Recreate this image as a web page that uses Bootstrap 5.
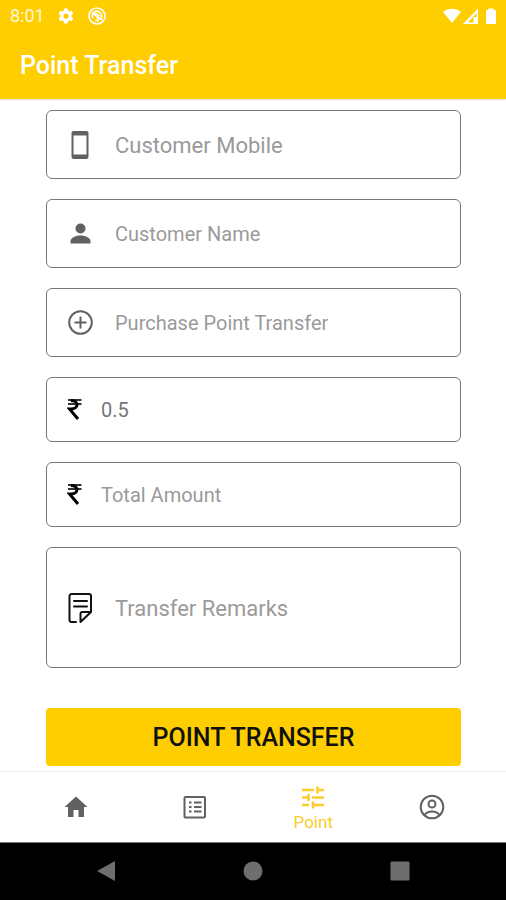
<!DOCTYPE html>
<html lang="en">
<head>
<meta charset="utf-8">
<meta name="viewport" content="width=device-width, initial-scale=1">
<title>Point Transfer</title>
<link href="https://cdn.jsdelivr.net/npm/bootstrap@5.3.0/dist/css/bootstrap.min.css" rel="stylesheet">
<style>
  :root { --brand: #ffce00; --icon: #616161; }
  body { font-family: Roboto, "Liberation Sans", sans-serif; background: #fff; }
  svg { display: block; flex: none; }
  .app-header { background: var(--brand); color: #fff; box-shadow: 0 1px 2px rgba(0, 0, 0, .15); }
  .status-bar { height: 32px; padding: 0 8px 0 10px; font-size: 18px; line-height: 32px; color: #fff8d8; }
  .app-title { height: 67px; padding-left: 20px; font-size: 25px; line-height: 68px; font-weight: 500; }
  .transfer-form { padding: 11px 45px 5px 46px; gap: 20px; }
  .field { height: 69px; border: 1px solid #777; border-radius: 6px; padding: 0 20px; background: #fff; cursor: text; color: var(--icon); }
  .field-amount { height: 65px; }
  .field-remarks { height: 121px; }
  .field:focus-within { border-color: var(--brand); }
  .field-icon { width: 28px; margin-right: 20px; }
  .field-amount .field-icon { width: 16px; margin-right: 18px; color: #000; }
  .field-remarks .field-icon { color: #111; }
  .entry { min-width: 0; border: 0; padding: 0; outline: 0; background: transparent; font-size: 20px; line-height: 28px; color: #777; resize: none; }
  .entry-lg { font-size: 22px; padding-top: 2px; }
  .entry::placeholder { color: #9a9a9a; opacity: 1; }
  .submit-btn, .submit-btn:hover { background: var(--brand); color: #111; height: 58px; margin-top: 20px; border: 0; border-radius: 4px; padding: 2px 0 0; font-size: 25px; font-weight: 500; line-height: 56px; }
  .tab-bar { height: 71px; border-top: 1px solid #f0f0f0; background: #fff; padding: 0 15px 0 17px; }
  .tab-link { color: var(--icon); text-decoration: none; font-size: 17px; line-height: 20px; gap: 3px; }
  .tab-link.active { color: #fdcc2a; padding-top: 2px; }
  .system-bar { height: 58px; background: #000; padding: 0 33px; border-top: 1px solid #777; }
  .system-btn { border: 0; padding: 0; background: transparent; color: #6e6e6e; height: 56px; }
</style>
<script src="https://cdn.jsdelivr.net/npm/bootstrap@5.3.0/dist/js/bootstrap.bundle.min.js"></script>
</head>
<body class="d-flex flex-column min-vh-100">

<header class="app-header">
  <div class="status-bar d-flex align-items-center">
    <span>8:01</span>
    <svg class="ms-2 me-2" width="26" height="18" viewBox="-5 0 34 24" fill="#fff" aria-hidden="true"><path d="M19.400 13a7.500 7.500 0 0 0 0-2l2.100-1.600a.5.5 0 0 0 .1-.6l-2-3.500a.5.5 0 0 0-.6-.2l-2.500 1a7 7 0 0 0-1.700-1l-.4-2.600a.5.5 0 0 0-.5-.4h-4a.5.5 0 0 0-.5.400L9 5.100a7 7 0 0 0-1.700 1l-2.500-1a.5.5 0 0 0-.6.200l-2 3.500a.5.5 0 0 0 .1.600L4.500 11a7.500 7.500 0 0 0 0 2l-2.200 1.600a.5.5 0 0 0-.1.600l2 3.500c.1.200.4.300.6.200l2.500-1a7 7 0 0 0 1.700 1l.4 2.600c0 .2.200.4.500.4h4c.3 0 .5-.2.500-.4l.4-2.600a7 7 0 0 0 1.700-1l2.500 1c.2.100.5 0 .6-.2l2-3.500a.5.5 0 0 0-.1-.6zM12 15.500a3.500 3.500 0 1 1 0-7 3.500 3.500 0 0 1 0 7z"/></svg>
    <svg width="20" height="20" viewBox="0 0 20 20" fill="none" stroke="#fff" aria-hidden="true"><circle cx="10" cy="10" r="8" stroke-width="1.700"/><path d="M6 12a4.500 4.500 0 0 1 7-5.500 4.500 4.500 0 0 1 .5 6.500M8 14.500l4 .2" stroke-width="1.600"/><path d="M6 7.500l7.500 5.500-4-.5M8 7l4.500 3" stroke-width="1.600"/></svg>
    <svg class="ms-auto" width="56" height="18" viewBox="0 0 56 18" fill="#fff" aria-hidden="true"><path d="M1 5C6 .5 14 .5 19 5l-9 11z"/><path fill-rule="evenodd" d="M36 1.500V17H21zM34.500 6L26 15.500h5.500V10h3z"/><path d="M46.500 1.500h5V3H53a1 1 0 0 1 1 1v12a1 1 0 0 1-1 1h-8a1 1 0 0 1-1-1V4a1 1 0 0 1 1-1h1.500z"/></svg>
  </div>
  <h1 class="app-title mb-0">Point Transfer</h1>
</header>

<main class="flex-grow-1">
  <form class="transfer-form d-flex flex-column">
    <label class="field d-flex align-items-center">
      <svg class="field-icon" width="28" height="28" viewBox="0 0 28 28" aria-hidden="true"><path fill="currentColor" fill-rule="evenodd" d="M6.500 0h13a2 2 0 0 1 2 2v24a2 2 0 0 1-2 2h-13a2 2 0 0 1-2-2V2a2 2 0 0 1 2-2zM6.500 4.500v19h13v-19z"/></svg>
      <input class="entry entry-lg flex-grow-1" type="tel" placeholder="Customer Mobile" aria-label="Customer Mobile">
    </label>
    <label class="field d-flex align-items-center">
      <svg class="field-icon" width="28" height="28" viewBox="0 0 28 28" fill="currentColor" aria-hidden="true"><circle cx="13.500" cy="8.500" r="5"/><path d="M3.500 23.500V21c0-3.500 6-5.500 10-5.500s10 2 10 5.500v2.500z"/></svg>
      <input class="entry flex-grow-1" type="text" placeholder="Customer Name" aria-label="Customer Name">
    </label>
    <label class="field d-flex align-items-center">
      <svg class="field-icon" width="28" height="28" viewBox="0 0 28 28" fill="none" stroke="currentColor" stroke-width="2" aria-hidden="true"><circle cx="13.500" cy="13.500" r="11.300"/><path d="M13.500 7.500v12M7.500 13.500h12"/></svg>
      <input class="entry flex-grow-1" type="text" placeholder="Purchase Point Transfer" aria-label="Purchase Point Transfer">
    </label>
    <label class="field field-amount d-flex align-items-center">
      <svg class="field-icon" width="16" height="24" viewBox="0 0 16 24" aria-hidden="true"><path d="M1 2h13.500M1 6h13.500" stroke="#333" stroke-width="2"/><path d="M4 2.500c8 0 8 8.500 0 8.500H2.500L11 21" fill="none" stroke="currentColor" stroke-width="3"/></svg>
      <input class="entry flex-grow-1" type="text" value="0.5" aria-label="Point rate">
    </label>
    <label class="field field-amount d-flex align-items-center">
      <svg class="field-icon" width="16" height="24" viewBox="0 0 16 24" aria-hidden="true"><path d="M1 2h13.500M1 6h13.500" stroke="#333" stroke-width="2"/><path d="M4 2.500c8 0 8 8.500 0 8.500H2.500L11 21" fill="none" stroke="currentColor" stroke-width="3"/></svg>
      <input class="entry flex-grow-1" type="text" placeholder="Total Amount" aria-label="Total Amount">
    </label>
    <label class="field field-remarks d-flex align-items-center">
      <svg class="field-icon" width="28" height="32" viewBox="0 0 28 32" fill="none" stroke="currentColor" stroke-width="2" stroke-linejoin="round" stroke-linecap="round" aria-hidden="true"><path d="M9 30H4.500a2 2 0 0 1-2-2V4a2 2 0 0 1 2-2H22a2 2 0 0 1 2 2v16L13.500 30V22a2 2 0 0 1 2-2H24M7 9h13M7 14.500h13"/></svg>
      <textarea class="entry entry-lg flex-grow-1" rows="1" placeholder="Transfer Remarks" aria-label="Transfer Remarks"></textarea>
    </label>
    <button type="button" class="btn submit-btn w-100">POINT TRANSFER</button>
  </form>
</main>

<nav class="tab-bar d-flex" aria-label="Main">
  <a href="#" class="tab-link d-flex flex-column align-items-center justify-content-center flex-fill w-25" aria-label="Home">
    <svg width="28" height="28" viewBox="0 0 28 28" fill="currentColor" aria-hidden="true"><path d="M14 3.500L2.500 14H6v10h5.500v-7h5v7H22V14h3.500z"/></svg>
  </a>
  <a href="#" class="tab-link d-flex flex-column align-items-center justify-content-center flex-fill w-25" aria-label="List">
    <svg width="28" height="28" viewBox="0 0 28 28" fill="none" stroke="currentColor" stroke-width="2" aria-hidden="true"><rect x="3.500" y="4" width="20.500" height="20.500" rx="1"/><path d="M8 9.500h2.500M8 14h2.500M8 18.500h2.500M13 9.500h7.500M13 14h7.500M13 18.500h7.500"/></svg>
  </a>
  <a href="#" class="tab-link active d-flex flex-column align-items-center justify-content-center flex-fill w-25" aria-current="page">
    <svg width="28" height="24" viewBox="0 0 28 24" fill="none" stroke="currentColor" stroke-width="2.500" aria-hidden="true"><path d="M3 5h12M18.500 1.500v7M18.500 5H25M3 12.500h6.500M9.500 9v7M13 12.500h12M3 20h7M14 16.500v7M14 20h11"/></svg>
    <span>Point</span>
  </a>
  <a href="#" class="tab-link d-flex flex-column align-items-center justify-content-center flex-fill w-25" aria-label="Profile">
    <svg width="28" height="28" viewBox="0 0 28 28" fill="none" stroke="currentColor" stroke-width="2" aria-hidden="true"><circle cx="14" cy="14" r="11.300"/><circle cx="14" cy="11" r="3.500"/><path d="M6.500 22c2-3 5-3.500 7.500-3.500s5.500.5 7.500 3.500"/></svg>
  </a>
</nav>

<div class="system-bar d-flex">
  <button type="button" class="system-btn flex-fill d-flex align-items-center justify-content-center" aria-label="Back"><svg width="20" height="22" viewBox="0 0 20 22" fill="currentColor" aria-hidden="true"><path d="M1 11L19 1v20z"/></svg></button>
  <button type="button" class="system-btn flex-fill d-flex align-items-center justify-content-center" aria-label="Home"><svg width="20" height="20" viewBox="0 0 20 20" fill="currentColor" aria-hidden="true"><circle cx="10" cy="10" r="9.500"/></svg></button>
  <button type="button" class="system-btn flex-fill d-flex align-items-center justify-content-center" aria-label="Recent apps"><svg width="20" height="20" viewBox="0 0 20 20" fill="currentColor" aria-hidden="true"><rect x=".5" y=".5" width="19" height="19" rx="1"/></svg></button>
</div>

</body>
</html>
